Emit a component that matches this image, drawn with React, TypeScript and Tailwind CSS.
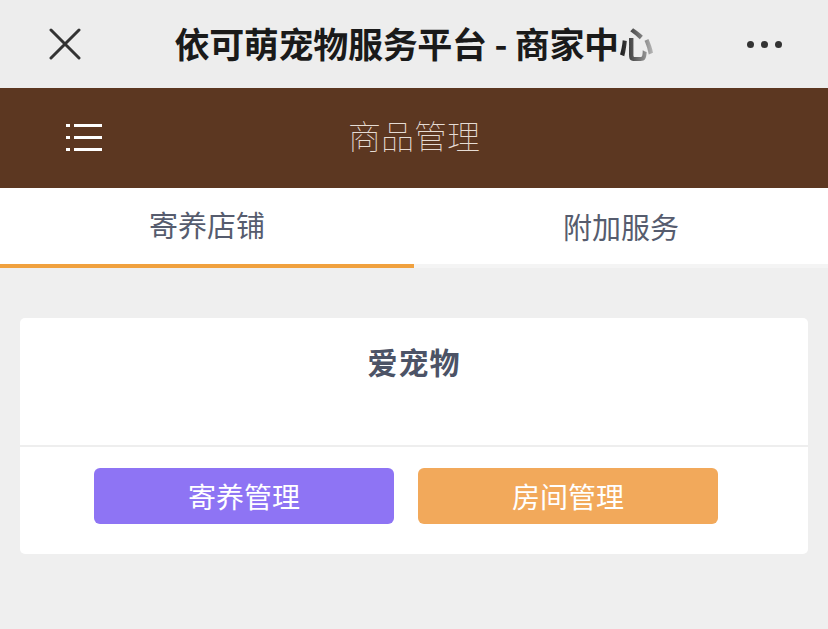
import { useState } from 'react';

const font = { fontFamily: '"Noto Sans CJK SC", "Noto Sans", sans-serif' };

function TopBar() {
    return (
        <div className="h-[88px] bg-[#ededed] flex items-center relative">
            {/* Close */}
            <div className="w-[130px] pl-[49px] flex items-center">
                <svg width="32" height="32" viewBox="0 0 32 32" fill="none">
                    <path d="M2 2 L30 30 M30 2 L2 30" stroke="#333" strokeWidth="3" strokeLinecap="round" />
                </svg>
            </div>
            <div className="flex-1 text-center text-[35px] font-bold text-[#1a1a1a] leading-none tracking-[-0.3px] pb-[4px]">
                依可萌宠物服务平台 - 商家中
                <span className="bg-gradient-to-r from-[#1a1a1a] to-[#bbbbbb] bg-clip-text text-transparent">心</span>
            </div>
            {/* More */}
            <div className="w-[130px] flex items-center justify-end pr-[46px] gap-[7px]">
                <span className="w-[7px] h-[7px] rounded-full bg-[#333]" />
                <span className="w-[7px] h-[7px] rounded-full bg-[#333]" />
                <span className="w-[7px] h-[7px] rounded-full bg-[#333]" />
            </div>
        </div>
    );
}

function Header() {
    return (
        <div className="h-[100px] bg-[#5c3721] flex items-center relative">
            <div className="w-[130px] pl-[66px]">
                <svg width="36" height="28" viewBox="0 0 36 28" fill="#ffffff">
                    <rect x="0" y="0" width="4" height="3" />
                    <rect x="8" y="0" width="28" height="3" />
                    <rect x="0" y="12" width="4" height="3" />
                    <rect x="8" y="12" width="28" height="3" />
                    <rect x="0" y="24" width="4" height="3" />
                    <rect x="8" y="24" width="28" height="3" />
                </svg>
            </div>
            <div className="flex-1 text-center text-[33px] font-thin text-[#e6dcd4] leading-none pb-[6px]">
                商品管理
            </div>
            <div className="w-[130px]" />
        </div>
    );
}

export default function App() {
    const [tab, setTab] = useState(0);
    const tabs = ['寄养店铺', '附加服务'];

    return (
        <div className="min-h-[629px] bg-[#efefef]" style={font}>
            <TopBar />
            <Header />

            {/* Tabs */}
            <div className="flex bg-white h-[80px]">
                {tabs.map((t, i) => (
                    <button
                        key={t}
                        onClick={() => setTab(i)}
                        className={
                            'flex-1 flex items-center justify-center text-[29px] text-[#565c6e] leading-none border-b-4 ' +
                            (tab === i ? 'border-[#f0a13e] pb-[4px]' : 'border-[#f4f4f4] pt-[0px]')
                        }
                    >
                        {t}
                    </button>
                ))}
            </div>

            {/* Shop card */}
            <div className="px-[20px] pt-[50px]">
                <div className="bg-white rounded-[5px]">
                    <div className="h-[127px] flex justify-center pt-[28px] text-[30px] font-bold text-[#4c5366] leading-none tracking-[1px]">
                        爱宠物
                    </div>
                    <div className="h-[2px] bg-[#eeeeee]" />
                    <div className="flex gap-[24px] pl-[74px] pt-[21px] pb-[30px]">
                        <button className="w-[300px] h-[56px] rounded-[6px] bg-[#8e74f4] text-white text-[28px] leading-none">
                            寄养管理
                        </button>
                        <button className="w-[300px] h-[56px] rounded-[6px] bg-[#f2a95b] text-white text-[28px] leading-none">
                            房间管理
                        </button>
                    </div>
                </div>
            </div>
        </div>
    );
}
